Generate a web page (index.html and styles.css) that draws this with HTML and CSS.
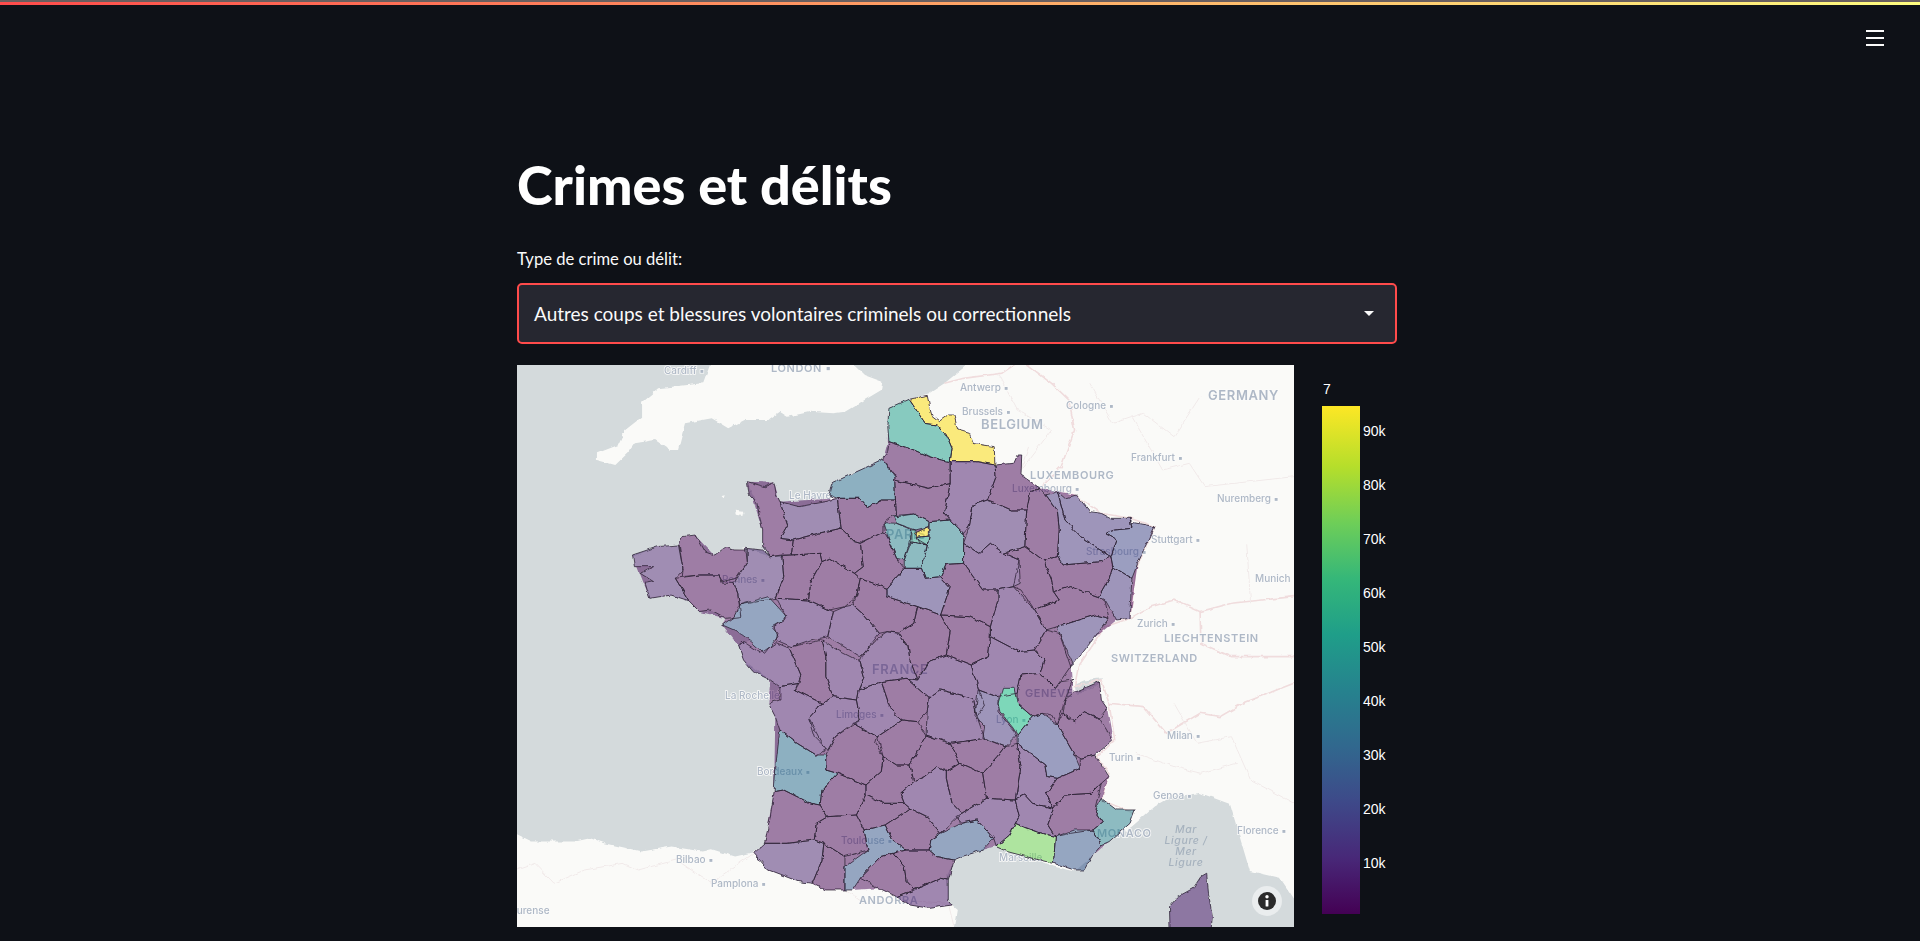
FILE: index.html
```html
<!DOCTYPE html>
<html lang="fr">
<head>
<meta charset="utf-8">
<title>Crimes et délits</title>
<link rel="stylesheet" href="styles.css">
</head>
<body>
<div class="deco"></div>
<header class="topbar">
  <button class="menu" aria-label="Menu"><span></span><span></span><span></span></button>
</header>
<main class="main">
  <h1 class="title">Crimes et délits</h1>
  <label class="field-label">Type de crime ou délit:</label>
  <div class="select">
    <span>Autres coups et blessures volontaires criminels ou correctionnels</span>
    <i class="caret"></i>
  </div>
  <section class="plot">
    <svg class="map" viewBox="517 365 777 562" width="777" height="562">
      <defs>
        <filter id="rough" x="517" y="365" width="777" height="562" filterUnits="userSpaceOnUse">
          <feTurbulence type="fractalNoise" baseFrequency="0.14" numOctaves="2" seed="4"/>
          <feDisplacementMap in="SourceGraphic" scale="4" xChannelSelector="R" yChannelSelector="G"/>
        </filter>
        <filter id="soft" x="-5%" y="-20%" width="110%" height="140%"><feGaussianBlur stdDeviation="0.35"/></filter>
      </defs>
      <rect class="land" x="517" y="365" width="777" height="562"/>
      <g filter="url(#rough)"><g transform="translate(600 370) scale(.3827 .3333)">
        <polygon class="sea" points="-230,-30 292,-30 270,40 152,55 110,95 110,140 66,180 48,225 -8,250 -8,270 40,285 72,250 91,220 144,210 183,240 204,240 222,160 292,145 335,175 378,150 440,150 470,125 490,140 550,125 610,130 640,125 735,60 738,35 690,15 650,-30 975,-30 900,40 860,70 808,88 755,115 752,215 755,240 740,268 690,295 605,340 598,380 560,405 520,410 470,395 460,370 455,338 430,350 385,335 410,400 425,480 425,530 445,560 380,535 350,540 330,530 300,555 275,545 250,495 215,500 207,525 150,530 85,560 90,590 140,590 105,610 140,635 118,640 130,685 185,675 232,692 260,725 290,720 330,745 320,765 360,785 390,810 365,825 375,870 445,930 470,950 440,1000 458,1040 470,1080 460,1180 455,1265 430,1420 400,1448 353,1460 292,1438 266,1445 187,1430 109,1445 13,1420 -26,1405 -65,1415 -178,1415 -230,1385"/>
        <polygon class="sea" points="925,1690 935,1620 920,1605 910,1590 908,1510 930,1470 1000,1435 1035,1430 1065,1445 1130,1465 1185,1490 1240,1505 1285,1460 1330,1415 1390,1370 1450,1310 1495,1280 1530,1275 1568,1269 1646,1302 1664,1371 1698,1503 1777,1524 1830,1614 1830,1690"/>
        <polygon class="sea" points="1240,945 1270,930 1312,925 1300,945 1260,965 1245,975"/>
        <polygon class="land" points="318,378 326,376 322,388"/>
        <polygon class="land" points="352,422 375,425 372,438 355,434"/>
        <g class="borders">
          <polyline points="900,40 950,25 1050,10 1100,-30"/>
          <polyline points="1100,-30 1180,40 1225,90 1240,180 1205,290 1150,355"/>
          <polyline points="1150,355 1200,365 1240,375 1310,430 1385,445 1450,470 1400,600 1385,745 1440,710 1500,690 1568,725 1650,700 1813,680"/>
          <polyline points="1385,745 1320,770 1250,890 1240,950 1310,930 1330,1000 1345,1110 1300,1160 1330,1210 1310,1290 1395,1330"/>
          <polyline points="1330,1000 1420,1010 1480,1090 1568,1030 1620,1040 1680,1000 1813,940"/>
          <polyline points="1568,725 1570,820 1650,860 1813,860"/>
          <polyline class="faint" points="-217,1500 -170,1480 -120,1540 -40,1500 60,1480 100,1500 200,1470 290,1540 402,1450"/>
          <polyline class="faint" points="640,1560 690,1600 780,1590 910,1600 925,1670"/>
          <polyline class="faint" points="1040,10 1090,120 1180,180 1100,300 1120,230"/>
          <polyline class="faint" points="1280,40 1340,160 1420,130 1500,200 1568,80"/>
          <polyline class="faint" points="1390,140 1470,300 1540,280 1580,350 1813,320"/>
          <polyline class="faint" points="1690,520 1700,700"/>
          <polyline class="faint" points="1500,1000 1560,1120 1650,1100 1700,1230 1813,1300"/>
          <polyline class="faint" points="1400,1150 1500,1190 1570,1210 1664,1180"/>
        </g>
      </g></g>
      <g class="labels" filter="url(#soft)">
        <text x="664" y="374">Cardiff ▪</text><text class="cap" x="771" y="372">LONDON ▪</text>
        <text x="960" y="391">Antwerp ▪</text><text x="962" y="415">Brussels ▪</text>
        <text class="big" x="981" y="429">BELGIUM</text><text x="1066" y="409">Cologne ▪</text>
        <text class="big" x="1208" y="400">GERMANY</text><text x="1131" y="461">Frankfurt ▪</text>
        <text class="cap" x="1030" y="479">LUXEMBOURG</text><text x="1012" y="492">Luxembourg ▪</text>
        <text x="789" y="499">Le Havre</text><text class="big" x="886" y="539">PARIS</text>
        <text x="1151" y="543">Stuttgart ▪</text><text x="1086" y="555">Strasbourg ▪</text>
        <text x="1217" y="502">Nuremberg ▪</text><text x="1255" y="582">Munich ▪</text>
        <text x="722" y="583">Rennes ▪</text><text x="1137" y="627">Zurich ▪</text>
        <text class="cap" x="1164" y="642">LIECHTENSTEIN</text><text class="cap" x="1111" y="662">SWITZERLAND</text>
        <text class="big" x="872" y="674">FRANCE</text><text x="725" y="699">La Rochelle</text>
        <text class="cap" x="1025" y="697">GENEVE</text>
        <text x="836" y="718">Limoges ▪</text><text x="996" y="723">Lyon ▪</text>
        <text x="1167" y="739">Milan ▪</text><text x="1109" y="761">Turin ▪</text>
        <text x="757" y="775">Bordeaux ▪</text><text x="1153" y="799">Genoa ▪</text>
        <text x="1237" y="834">Florence ▪</text><text class="cap" x="1097" y="837">MONACO</text>
        <text x="841" y="844">Toulouse ▪</text><text x="999" y="861">Marseille</text>
        <text x="676" y="863">Bilbao ▪</text><text x="711" y="887">Pamplona ▪</text>
        <text class="cap" x="859" y="904">ANDORRA</text><text x="509" y="914">Ourense</text>
        <text class="sea-name" x="1186" y="833">Mar</text><text class="sea-name" x="1186" y="844">Ligure /</text>
        <text class="sea-name" x="1186" y="855">Mer</text><text class="sea-name" x="1186" y="866">Ligure</text>
      </g>
      <g filter="url(#rough)">
      <g class="fills">
      <polygon class="d0" transform="translate(600 370) scale(.3827 .3333)" points="755,115 808,88 855,76 862,115 868,140 885,155 910,135 925,135 935,180 975,220 1030,230 1032,285 1080,280 1090,255 1102,255 1100,315 1150,355 1200,365 1245,375 1280,425 1335,445 1390,457 1450,470 1405,580 1385,745 1350,750 1290,805 1230,890 1235,970 1305,935 1310,990 1325,1015 1340,1110 1290,1155 1330,1220 1310,1285 1350,1320 1398,1320 1385,1360 1330,1415 1285,1460 1265,1500 1240,1500 1185,1480 1130,1465 1065,1445 1030,1430 1000,1440 945,1460 925,1470 910,1530 910,1590 920,1605 860,1615 810,1605 775,1580 730,1555 660,1560 590,1560 555,1540 520,1535 440,1500 402,1450 430,1420 455,1265 458,1040 440,1000 445,930 375,870 362,828 320,765 330,745 260,725 232,692 185,675 130,685 85,555 207,525 250,495 300,555 385,540 445,560 425,480 385,335 455,338 470,395 620,385 598,375 605,340 740,268 752,215"/>
      <g id="north" transform="translate(600 370) scale(.3827 .3333)">
        <polygon class="y" points="808,88 855,76 862,115 868,140 885,155 910,135 925,135 935,180 965,190 975,220 1030,230 1032,285 985,275 915,275 920,235 905,195 882,165 850,160 835,135"/>
        <polygon class="t" points="755,115 808,88 835,135 850,160 882,165 905,195 920,235 915,275 885,268 850,255 810,235 755,215 752,170"/>
        <polygon class="d0" points="755,215 810,235 850,255 885,268 915,275 915,340 860,355 770,330 772,320 740,265 752,245"/>
        <polygon class="b2" points="740,268 770,320 772,390 735,390 700,412 680,385 620,385 598,375 605,340 690,295"/>
        <polygon class="d1" points="915,275 985,275 1032,285 1035,320 1012,390 975,405 965,470 950,490 915,450 900,430 915,340"/>
        <polygon class="d0" points="770,330 860,355 915,340 900,430 915,450 860,455 820,432 775,440 772,390"/>
        <polygon class="d0" points="1032,285 1080,280 1090,255 1102,255 1100,315 1150,355 1125,365 1115,420 1075,420 1025,395 1012,390 1035,320"/>
        <polygon class="d0" points="1125,365 1150,355 1165,375 1195,420 1200,480 1195,560 1160,572 1110,530 1115,420"/>
        <polygon class="d3" points="1165,375 1195,365 1215,450 1265,510 1335,560 1310,575 1210,585 1195,560 1200,480 1195,420"/>
        <polygon class="d3" points="1195,365 1215,385 1245,375 1280,425 1310,430 1335,445 1385,445 1390,475 1345,480 1320,490 1350,510 1335,560 1265,510 1215,450"/>
        <polygon class="d4" points="1385,445 1390,457 1450,470 1430,520 1405,580 1390,625 1340,590 1335,560 1350,510 1320,490 1345,480 1390,475"/>
        <polygon class="d3" points="1340,590 1390,625 1385,720 1385,745 1350,750 1320,690 1305,680 1330,630"/>
        <polygon class="d0" points="1160,572 1195,560 1210,585 1310,575 1335,560 1340,590 1330,630 1305,680 1230,650 1185,665 1180,630"/>
        <polygon class="d2" points="975,405 1012,390 1025,395 1075,420 1115,420 1110,530 1055,550 1020,520 990,550 950,520 965,470"/>
        <polygon class="d0" points="1110,530 1160,572 1180,630 1185,665 1200,690 1135,720 1100,660 1080,650 1095,570 1055,550"/>
        <polygon class="d1" points="950,520 990,550 1020,520 1055,550 1095,570 1098,640 1080,650 1040,660 1000,660 975,620 950,580"/>
        <polygon class="d0" points="1185,665 1230,650 1305,680 1320,695 1330,745 1295,735 1195,770 1165,780 1135,720 1200,690"/>
        <polygon class="d3" points="1195,770 1295,735 1330,745 1290,805 1240,880 1230,890 1200,790"/>
        <polygon class="t2" points="860,455 915,450 950,490 950,580 905,583 890,620 850,625 840,595 855,530 860,500"/>
        <polygon class="t2" points="765,437 820,432 860,455 858,470 825,480 775,460"/>
        <polygon class="t2" points="742,458 775,460 815,480 815,510 795,570 775,565 755,510"/>
        <polygon class="t2" points="810,515 855,525 840,595 795,595 795,570"/>
        <polygon class="t3" points="815,480 825,480 830,508 855,525 810,515"/>
        <polygon class="y" points="822,490 858,470 858,498 830,502"/>
        <polygon class="t3" points="830,502 860,498 855,525 835,518"/>
        <polygon class="d0" points="620,385 680,385 700,412 735,390 772,390 775,440 765,437 742,458 742,485 680,520 665,515 630,475"/>
        <polygon class="d2" points="470,395 520,410 590,395 620,385 630,475 570,490 505,510 470,505 490,465"/>
        <polygon class="d0" points="385,335 430,350 455,338 460,370 470,395 490,465 470,505 505,510 500,555 445,560 425,530 425,480 410,400 390,375"/>
        <polygon class="d0" points="505,510 570,490 630,475 665,515 680,520 688,590 665,610 600,565 580,575 575,550 500,555"/>
        <polygon class="d0" points="680,520 742,485 755,510 775,565 795,595 750,655 680,625 665,610 688,590"/>
        <polygon class="d3" points="795,595 840,595 850,625 890,620 915,650 890,735 830,710 750,680 750,655"/>
        <polygon class="d0" points="905,583 950,580 975,620 1000,660 1040,660 1040,690 1020,770 965,740 890,735 915,650 890,620"/>
        <polygon class="d1" points="1040,660 1080,650 1135,720 1165,780 1135,840 1095,845 1020,800 1020,770 1040,690"/>
        <polygon class="d2" points="85,555 150,530 205,525 217,600 197,625 232,692 185,675 130,685 118,640 140,635 105,610 140,590 90,590"/>
        <polygon class="d0" points="207,525 215,500 250,495 275,545 300,555 330,530 350,540 385,540 385,575 355,625 320,635 310,615 260,615 215,620 217,600"/>
        <polygon class="d2" points="380,535 425,540 445,560 475,555 480,620 460,685 365,705 360,670 350,640 385,575"/>
        <polygon class="d0" points="197,625 260,615 310,615 320,640 350,640 360,670 368,740 330,745 290,720 260,725 232,692"/>
        <polygon class="d0" points="475,555 500,555 575,550 580,575 550,640 545,690 460,685 480,620"/>
        <polygon class="d0" points="580,575 600,565 665,610 680,625 670,680 640,710 600,720 545,690 550,640"/>
        <polygon class="b" points="365,705 440,680 488,740 455,770 465,800 430,850 390,810 360,785 320,765 350,740"/>
        <polygon class="d1" points="460,685 545,690 610,725 595,800 550,810 500,830 460,810 465,790 450,770 488,745"/>
        <polygon class="d1" points="610,725 640,710 660,705 690,735 730,790 690,850 680,860 625,820 595,800"/>
        <polygon class="d0" points="670,680 680,625 750,655 750,680 830,710 820,760 780,790 750,785 730,790 690,735 660,705"/>
      </g>
      <g id="south" transform="translate(600 640) scale(.3827 .3333)">
        <polygon class="d1" points="362,18 375,5 420,40 460,8 495,25 525,105 520,130 470,140 445,120 400,95 375,60"/>
        <polygon class="d0" points="495,25 500,20 580,0 590,50 590,110 610,170 580,190 510,150 525,105"/>
        <polygon class="d1" points="580,0 620,30 680,65 690,110 675,150 670,180 610,170 590,110 590,50"/>
        <polygon class="d1" points="470,140 520,130 510,150 580,190 545,235 590,330 565,345 515,310 470,270 458,230 440,190 470,180"/>
        <polygon class="d1" points="545,235 580,190 610,170 670,180 680,240 615,290 595,330 560,290"/>
        <polygon class="d1" points="675,150 735,125 760,210 790,240 725,290 660,250 680,240 670,180"/>
        <polygon class="d0" points="735,125 800,115 860,175 855,215 830,245 790,240 760,210"/>
        <polygon class="d1" points="680,65 690,40 730,-10 750,-25 780,-20 805,20 810,60 830,120 800,115 735,125 675,150 690,110"/>
        <polygon class="d0" points="830,-100 890,-75 915,-25 905,45 860,65 830,120 810,60 805,20 780,-20 820,-50"/>
        <polygon class="d0" points="890,-75 965,-70 1020,-40 1020,-10 1015,50 970,75 905,45 915,-25"/>
        <polygon class="d1" points="830,120 860,65 905,45 970,75 990,150 1005,195 985,230 975,175 890,150 860,175 800,115"/>
        <polygon class="d1" points="1020,-10 1095,35 1135,30 1160,60 1150,100 1100,105 1090,160 1035,170 990,150 970,75 1015,50"/>
        <polygon class="d0" points="1135,30 1165,-30 1200,-20 1235,70 1205,120 1190,145 1150,100 1160,60"/>
        <polygon class="d0" points="1090,160 1100,105 1150,100 1190,145 1205,125 1235,120 1215,180 1195,255 1180,225 1155,220 1130,230 1090,190"/>
        <polygon class="d3" points="988,150 1040,170 1040,215 1080,270 1087,290 1060,320 1000,295 1005,260 980,230"/>
        <polygon class="d1" points="855,215 860,175 890,150 975,175 985,230 1005,295 915,310 852,285"/>
        <polygon class="g" points="1052,145 1082,145 1090,190 1130,230 1090,285 1080,265 1045,215 1040,190"/>
        <polygon class="d0" points="725,290 790,240 830,245 852,285 810,375 775,375 740,350 720,310"/>
        <polygon class="d0" points="852,285 915,310 940,370 905,395 880,380 850,410 820,425 810,375"/>
        <polygon class="d0" points="915,310 1005,295 1060,320 1040,350 1000,400 940,370"/>
        <polygon class="d0" points="1060,320 1090,310 1100,380 1085,480 1010,475 1000,400 1040,350"/>
        <polygon class="d0" points="905,395 940,370 1000,400 1010,475 945,520 920,490 905,415"/>
        <polygon class="d1" points="785,460 820,425 850,410 880,380 905,395 905,415 920,490 945,520 890,580 855,530 810,505 795,490"/>
        <polygon class="d1" points="1090,310 1130,345 1165,375 1170,410 1195,415 1165,460 1185,505 1130,490 1110,465 1085,480 1100,380"/>
        <polygon class="d4" points="1090,285 1130,230 1155,220 1195,255 1210,285 1240,345 1255,385 1195,415 1170,410 1165,375 1130,345 1090,310"/>
        <polygon class="d0" points="1215,180 1235,160 1305,125 1310,180 1325,205 1305,235 1265,215 1240,245 1210,220"/>
        <polygon class="d0" points="1195,255 1210,220 1240,245 1265,215 1305,235 1340,300 1295,345 1255,355 1240,345 1210,285"/>
        <polygon class="d0" points="1195,415 1255,385 1255,355 1295,345 1330,410 1310,430 1285,460 1215,465 1185,505 1165,460"/>
        <polygon class="d0" points="1185,505 1215,465 1285,460 1310,430 1293,510 1315,545 1288,570 1230,580 1190,590 1170,555"/>
        <polygon class="t2" points="1310,475 1350,510 1398,510 1385,550 1330,605 1310,615 1288,570 1315,545 1293,510"/>
        <polygon class="b" points="1190,590 1240,570 1288,570 1310,615 1285,650 1265,690 1240,690 1185,670"/>
        <polygon class="d1" points="1085,480 1110,465 1130,490 1185,505 1170,555 1190,590 1140,575 1085,550 1095,530"/>
        <polygon class="l" points="1035,620 1070,585 1085,550 1115,565 1140,575 1190,590 1185,670 1130,655 1065,635"/>
        <polygon class="d1" points="945,520 1010,475 1085,480 1095,530 1070,585 1035,620 1028,595 985,540 945,550 930,530"/>
        <polygon class="b" points="945,550 985,540 1028,595 1000,630 945,650 925,660 880,650 860,630 865,600 890,580"/>
        <polygon class="d0" points="765,640 800,630 860,630 880,650 925,660 910,720 890,715 820,750 800,725 795,680"/>
        <polygon class="d1" points="775,770 820,750 890,715 910,720 910,780 920,795 860,805 810,795"/>
        <polygon class="d0" points="745,555 810,505 855,530 890,580 865,600 860,630 800,630 765,600"/>
        <polygon class="b" points="690,570 745,555 765,600 800,630 765,640 735,650 710,680 680,715 660,750 640,750 640,680 700,630"/>
        <polygon class="d0" points="670,525 695,465 740,490 795,490 810,505 745,555 690,570"/>
        <polygon class="d0" points="695,435 735,395 740,350 775,375 810,375 820,425 785,460 795,490 740,490 695,465"/>
        <polygon class="d0" points="590,345 615,290 660,250 725,290 740,350 735,395 695,435 620,400 590,390"/>
        <polygon class="d0" points="575,495 580,450 620,400 695,435 695,465 670,525 595,530"/>
        <polygon class="b2" points="470,270 515,310 565,345 590,345 590,390 620,400 580,450 575,495 550,490 480,450 455,455 460,370"/>
        <polygon class="d0" points="455,455 480,450 550,490 575,495 595,530 565,550 560,600 490,610 430,610 445,530"/>
        <polygon class="d0" points="565,550 595,530 670,525 690,570 700,630 640,650 585,610 560,600"/>
        <polygon class="d2" points="402,640 430,610 490,610 560,600 585,610 580,660 555,730 520,725 440,690"/>
        <polygon class="d0" points="585,610 640,650 640,680 640,750 590,750 555,730 580,660"/>
        <polygon class="d0" points="680,715 710,680 735,650 765,640 795,680 800,725 820,750 775,770 730,745"/>
        <polygon class="d1" points="1570,710 1585,700 1590,760 1600,830 1595,890 1490,890 1488,800 1510,770 1550,745"/>
      </g>
      </g>
      <g class="lines"><use href="#north"/><use href="#south"/></g>
      </g>
      <circle class="info-halo" cx="1267" cy="901" r="15"/>
      <circle class="info-dot" cx="1267" cy="901" r="9"/>
      <rect class="info-i" x="1265.6" y="900" width="2.8" height="6.5" rx=".6"/>
      <circle class="info-i" cx="1267" cy="896.8" r="1.7"/>
    </svg>
    <aside class="legend">
      <div class="legend-title">7</div>
      <div class="legend-body">
        <div class="bar"></div>
        <ul class="ticks">
          <li>90k</li><li>80k</li><li>70k</li><li>60k</li><li>50k</li><li>40k</li><li>30k</li><li>20k</li><li>10k</li>
        </ul>
      </div>
    </aside>
  </section>
</main>
</body>
</html>
```
FILE: styles.css
```css
* { box-sizing: border-box; }
html, body { margin: 0; height: 941px; overflow: hidden; background: #0e1117; color: #fafafa; }
body { font-family: "Lato", "Noto Sans", sans-serif; }

.deco { height: 5px; border-top: 2px solid #6a5f5f; background: linear-gradient(90deg, #ff4b4b, #fffd80); }

.topbar { display: flex; justify-content: flex-end; padding: 25px 36px 0 0; height: 45px; }
.menu { display: flex; flex-direction: column; justify-content: space-between; width: 18px; height: 16px; padding: 0; border: 0; background: none; }
.menu span { display: block; height: 2px; background: #fafafa; }

.main { width: 880px; margin-left: 517px; }
.title { margin: 0; padding-top: 102px; font-size: 54px; line-height: 66px; font-weight: 900; color: #fff; white-space: nowrap; }
.field-label { display: block; margin-top: 30px; font-size: 16.6px; line-height: 22px; color: #fafafa; }
.select { display: flex; align-items: center; justify-content: space-between; height: 61px; margin-top: 13px; padding: 0 21px 0 15px; background: #262730; border: 2px solid #ff4b4b; border-radius: 5px; font-size: 19px; }
.caret { width: 0; height: 0; border-left: 5px solid transparent; border-right: 5px solid transparent; border-top: 5px solid #fafafa; }

.plot { display: flex; gap: 28px; margin-top: 21px; }
.map { display: block; flex: none; }
.land { fill: #fafaf8; }
.sea { fill: #d4dadc; }
.borders polyline { fill: none; stroke: #f0dcdd; stroke-width: 1.6; vector-effect: non-scaling-stroke; }
.borders polyline.faint { stroke: #f1eaea; stroke-width: 1; }

.labels text { font-family: "Inter", "Open Sans", sans-serif; font-size: 10px; font-weight: 500; fill: #aeb8c6; stroke: #fbfbfa; stroke-width: 1.5px; paint-order: stroke; }
.labels .cap { font-size: 11px; font-weight: 600; letter-spacing: .6px; }
.labels .big { font-size: 13px; font-weight: 600; letter-spacing: .6px; }
.labels .sea-name { font-size: 10.5px; font-style: italic; fill: #a6b2be; stroke: none; text-anchor: middle; letter-spacing: .6px; }

.fills { opacity: .5; }
.fills polygon, .lines { stroke-linejoin: round; }
.lines { --f: none; --s: #2e2638; }
.fills polygon, #north polygon, #south polygon { fill: var(--f, var(--c)); stroke: var(--s, none); stroke-width: 1; stroke-opacity: .8; vector-effect: non-scaling-stroke; }
.d0 { --c: #440154; }
.d1 { --c: #46106a; }
.d2 { --c: #47206f; }
.d3 { --c: #42307f; }
.d4 { --c: #3e428a; }
.b { --c: #33548c; }
.b2 { --c: #27668c; }
.t2 { --c: #1e7d8b; }
.t3 { --c: #1f9e89; }
.t { --c: #159a87; }
.g { --c: #04b47a; }
.l { --c: #62cf48; }
.y { --c: #fcd900; }

.info-halo { fill: rgba(255, 255, 255, .5); }
.info-dot { fill: #2b2b2b; }
.info-i { fill: #fff; }

.legend { flex: none; font-family: "Liberation Sans", Arial, sans-serif; font-size: 14px; color: #fff; }
.legend-title { height: 41px; padding: 16px 0 0 1px; line-height: 16px; }
.legend-body { display: flex; }
.bar { width: 38px; height: 508px; background: linear-gradient(0deg, #440154, #482878 11%, #3e4989 22%, #31688e 33%, #26828e 44%, #1f9e89 55%, #35b779 66%, #6ece58 77%, #b5de2b 88%, #fde725 100%); }
.ticks { list-style: none; margin: -2px 0 0 3px; padding: 0; }
.ticks li { height: 54px; line-height: 54px; }
```
